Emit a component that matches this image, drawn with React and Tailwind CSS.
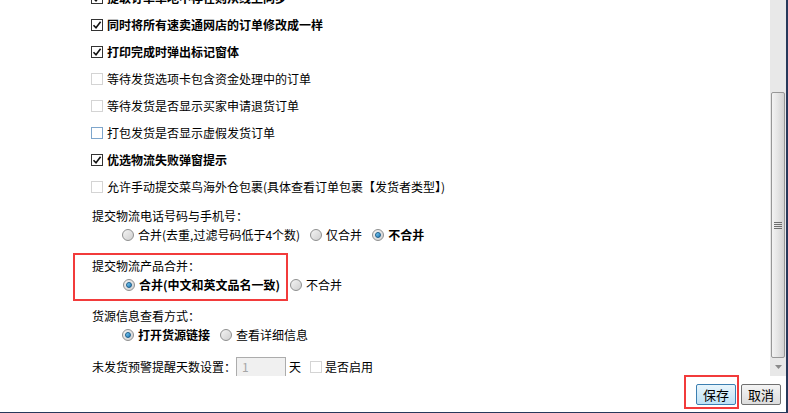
import React from 'react';

const font = { fontFamily: '"Microsoft YaHei", "Noto Sans CJK SC", "Noto Sans", sans-serif' };

const checkRows = [
  { label: '提取订单单地不存在则从线上同步', checked: true },
  { label: '同时将所有速卖通网店的订单修改成一样', checked: true },
  { label: '打印完成时弹出标记窗体', checked: true },
  { label: '等待发货选项卡包含资金处理中的订单', checked: false },
  { label: '等待发货是否显示买家申请退货订单', checked: false },
  { label: '打包发货是否显示虚假发货订单', checked: false, hover: true },
  { label: '优选物流失败弹窗提示', checked: true },
  { label: '允许手动提交菜鸟海外仓包裹(具体查看订单包裹【发货者类型】)', checked: false },
];

function CheckBox({ checked, hover }) {
  const border = checked ? 'border-[#333333]' : hover ? 'border-[#7ea6cc]' : 'border-[#d4d4d4]';
  return (
    <span className={`flex h-[12px] w-[12px] shrink-0 items-center justify-center border bg-white ${border}`}>
      {checked && (
        <svg width="10" height="10" viewBox="0 0 10 10">
          <path d="M1.5 5.2 L4 7.8 L8.6 1.8" fill="none" stroke="#111" strokeWidth="1.6" />
        </svg>
      )}
    </span>
  );
}

function Radio({ checked }) {
  return (
    <span className="flex h-[12px] w-[12px] shrink-0 items-center justify-center rounded-full border border-[#8e8f8f] bg-gradient-to-br from-[#f4f4f4] to-[#cfcfcf]">
      {checked && (
        <span className="h-[6px] w-[6px] rounded-full border border-[#1b5d8a] bg-gradient-to-br from-[#7fd0f5] to-[#1a78b8]" />
      )}
    </span>
  );
}

function Option({ checked, label }) {
  return (
    <span className="flex items-center gap-[4px]">
      <Radio checked={checked} />
      <span className={checked ? 'font-bold' : ''}>{label}</span>
    </span>
  );
}

export default function App() {
  return (
    <div
      className="flex h-[413px] w-[788px] flex-col overflow-hidden border-b border-r-2 border-[#27385a] bg-white text-[12px] leading-none text-black"
      style={font}
    >
      <div className="flex h-[376px]">
        <div className="flex-1 overflow-hidden">
          <div className="-mt-[16px] pl-[91px]">
            {checkRows.map((row) => (
              <div key={row.label} className="flex h-[27px] items-center gap-[4px]">
                <CheckBox checked={row.checked} hover={row.hover} />
                <span className={row.checked ? 'font-bold' : ''}>{row.label}</span>
              </div>
            ))}

            <div className="mt-[6px] flex h-[19px] items-center pl-[1px]">提交物流电话号码与手机号：</div>
            <div className="flex h-[19px] items-center gap-[10px] pl-[31px]">
              <Option label="合并(去重,过滤号码低于4个数)" />
              <Option label="仅合并" />
              <Option checked label="不合并" />
            </div>

            <div className="-ml-[18px] mt-[9px] w-[215px] border-2 border-[#f23b3b] pb-[5px] pt-[1px]">
              <div className="flex h-[19px] items-center pl-[17px]">提交物流产品合并：</div>
              <div className="flex h-[19px] items-center gap-[10px] pl-[48px]">
                <span className="shrink-0">
                  <Option checked label="合并(中文和英文品名一致)" />
                </span>
                <span className="shrink-0">
                  <Option label="不合并" />
                </span>
              </div>
            </div>

            <div className="mt-[5px] flex h-[19px] items-center pl-[1px]">货源信息查看方式：</div>
            <div className="flex h-[19px] items-center gap-[10px] pl-[31px]">
              <Option checked label="打开货源链接" />
              <Option label="查看详细信息" />
            </div>

            <div className="mt-[13px] flex h-[20px] items-center pl-[1px]">
              <span>未发货预警提醒天数设置：</span>
              <span className="flex h-[20px] w-[50px] items-center border border-[#acacac] bg-[#f0f0f0] pl-[5px] text-[#a6a6a6]">1</span>
              <span className="ml-[3px]">天</span>
              <span className="ml-[9px]">
                <CheckBox checked={false} />
              </span>
              <span className="ml-[3px]">是否启用</span>
            </div>
          </div>
        </div>

        <div className="flex w-[16px] flex-col bg-[#e8e8e8]">
          <div className="h-[92px]" />
          <div className="mx-[1px] flex h-[266px] items-center justify-center rounded-[2px] border border-[#979797] bg-gradient-to-r from-[#f3f3f3] via-[#e4e4e4] to-[#d2d2d2]">
            <div className="flex w-[8px] flex-col gap-[1px]">
              <span className="h-[1px] bg-[#6e6e6e]" />
              <span className="h-[1px] bg-[#6e6e6e]" />
              <span className="h-[1px] bg-[#6e6e6e]" />
              <span className="h-[1px] bg-[#6e6e6e]" />
            </div>
          </div>
          <div className="flex h-[18px] items-center justify-center">
            <svg width="7" height="4" viewBox="0 0 7 4">
              <path d="M0 0 H7 L3.5 4 Z" fill="#8a8a8a" />
            </svg>
          </div>
        </div>
      </div>

      <div className="flex flex-1 items-start justify-end gap-[5px] pr-[5px] pt-[8px]">
        <div className="relative">
          <button
            type="button"
            className="flex h-[21px] w-[40px] items-center justify-center rounded-[2px] border border-[#3c7fb1] bg-gradient-to-b from-[#e8f5fc] to-[#bde2f6] text-[13px]"
          >
            保存
          </button>
          <span className="pointer-events-none absolute -left-[12px] -right-[3px] -top-[9px] -bottom-[4px] border-2 border-[#f23b3b]" />
        </div>
        <button
          type="button"
          className="flex h-[21px] w-[40px] items-center justify-center rounded-[2px] border border-[#707070] bg-gradient-to-b from-[#f4f4f4] to-[#dcdcdc] text-[13px]"
        >
          取消
        </button>
      </div>
    </div>
  );
}
